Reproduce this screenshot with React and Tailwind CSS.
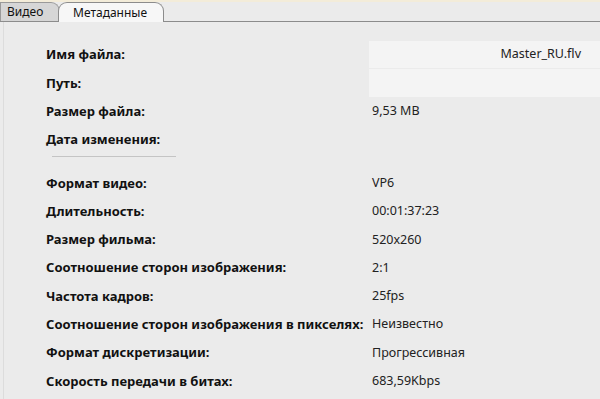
import React from 'react';

const general = [
    ['Имя файла:', 'Master_RU.flv', 'field'],
    ['Путь:', '', 'field'],
    ['Размер файла:', '9,53 MB'],
    ['Дата изменения:', ''],
];

const video = [
    ['Формат видео:', 'VP6'],
    ['Длительность:', '00:01:37:23'],
    ['Размер фильма:', '520x260'],
    ['Соотношение сторон изображения:', '2:1'],
    ['Частота кадров:', '25fps'],
    ['Соотношение сторон изображения в пикселях:', 'Неизвестно'],
    ['Формат дискретизации:', 'Прогрессивная'],
    ['Скорость передачи в битах:', '683,59Kbps'],
];

const Row = ({ label, value, kind }) => (
    <div className="flex items-stretch h-[28.3px]">
        <div className="w-[323px] shrink-0 flex items-center font-bold text-[13px] text-[#111]">{label}</div>
        {kind === 'field' ? (
            // поле только для чтения
            <div className="flex-1 flex items-center justify-end pr-[19px] bg-[#f4f4f4] border-b border-[#ebebeb] text-[#222]">
                {value}
            </div>
        ) : (
            <div className="flex-1 flex items-center pl-[3px] text-[#222]">{value}</div>
        )}
    </div>
);

const App = () => {
    return (
        <div className="w-[600px] h-[399px] overflow-hidden bg-[#ebebeb] text-[12.5px] font-['Noto_Sans',sans-serif] flex flex-col">
            <div className="h-[2px] bg-[#f3ecd9]"></div>
            {/* вкладки */}
            <div className="flex items-end h-[20px] border-b border-[#8c8c8c]">
                <div className="h-[19px] w-[60px] bg-[#d6d6d6] border border-b-0 border-[#9a9a9a] rounded-tr-[9px] flex items-center pl-[6px] text-[12px] text-[#111]">
                    Видео
                </div>
                <div className="h-[20px] w-[106px] -ml-[2px] -mb-px bg-[#f7f7f7] border border-b-0 border-[#8c8c8c] rounded-t-[9px] flex items-center pl-[14px] text-[12px] text-[#111]">
                    Метаданные
                </div>
            </div>
            <div className="flex-1 ml-[3px] border-l border-[#dcdcdc] pl-[42px] pt-[19px]">
                {general.map(([l, v, k]) => (
                    <Row key={l} label={l} value={v} kind={k} />
                ))}
                <div className="h-px w-[124px] ml-[6px] mt-[2px] mb-[12px] bg-[#c4c4c4]"></div>
                {video.map(([l, v]) => (
                    <Row key={l} label={l} value={v} />
                ))}
            </div>
        </div>
    );
};

export default App;
